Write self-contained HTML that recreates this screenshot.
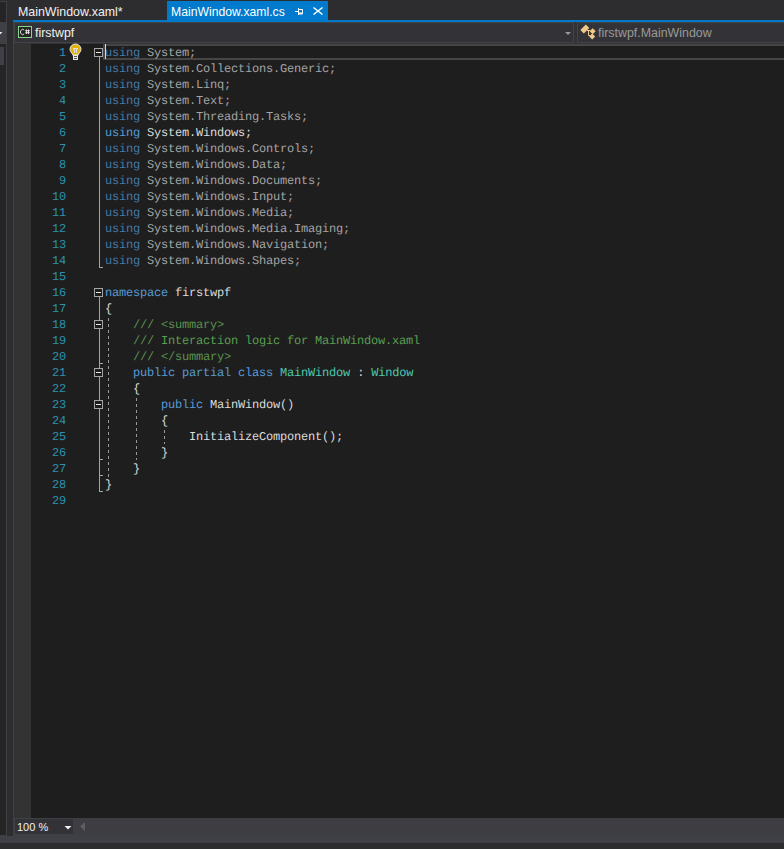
<!DOCTYPE html>
<html><head><meta charset="utf-8">
<style>
html,body{margin:0;padding:0}
body{width:784px;height:849px;background:#2d2d30;overflow:hidden;position:relative;font-family:"Liberation Sans",sans-serif}
.a{position:absolute}
.ui{font-family:"Liberation Sans",sans-serif;font-size:12.4px;line-height:16px;white-space:pre}
#code{position:absolute;left:105px;top:45px;font-family:"Liberation Mono",monospace;font-size:12px;letter-spacing:-0.2011px;line-height:16px;color:#dcdcdc;text-rendering:geometricPrecision}
#code div{height:16px;white-space:pre}
#nums{position:absolute;left:30px;width:36px;top:45px;font-family:"Liberation Mono",monospace;font-size:12px;letter-spacing:-0.2011px;line-height:16px;white-space:pre;color:#2b91af;text-rendering:geometricPrecision;text-align:right}
#nums div{height:16px}
.k{color:#569cd6}
.t{color:#4ec9b0}
.c{color:#5a9f52}
.x{color:#5b9150}
.dk{color:#4579a8}
.dt{color:#a4a4a4}
.guide{position:absolute;width:1px;background:repeating-linear-gradient(to bottom,#999999 0,#999999 3px,transparent 3px,transparent 6px)}
.fbox{position:absolute;left:94px;width:7px;height:7px;border:1px solid #a5a5a5;background:#1e1e1e}
.fbox:after{content:"";position:absolute;left:1px;top:3px;width:5px;height:1px;background:#e6e6e6}
.fl{position:absolute;left:99px;width:1px;background:#a5a5a5}
.tick{position:absolute;left:99px;width:4px;height:1px;background:#a5a5a5}
</style></head><body>

<!-- left side panel edge -->
<div class="a" style="left:0;top:1px;width:6px;height:834px;background:#252526;border-top:1px solid #3f3f46"></div>
<div class="a" style="left:0;top:22px;width:6px;height:22px;background:#3f3f46"></div>
<div class="a" style="left:0;top:47px;width:4px;height:18px;background:#3f3f46"></div>
<svg class="a" style="left:0;top:30px" width="6" height="6" viewBox="0 30 6 6"><path d="M-3 32H2.5L-0.25 34.8Z" fill="#f1f1f1"/></svg>
<div class="a" style="left:6px;top:1px;width:1px;height:835px;background:#3f3f46"></div>

<!-- tabs -->
<div class="a ui" style="left:18px;top:4px;color:#f1f1f1">MainWindow.xaml*</div>
<div class="a" style="left:167px;top:1px;width:161px;height:19px;background:#007acc"></div>
<div class="a ui" style="left:171px;top:4px;color:#ffffff;font-size:12.2px">MainWindow.xaml.cs</div>
<svg class="a" style="left:290px;top:4px" width="36" height="14" viewBox="290 4 36 14">
<path d="M295 11.5H298" stroke="#fff" stroke-width="1"/>
<path d="M298.5 8V15" stroke="#fff" stroke-width="1"/>
<path d="M298.5 9.5H302.5V13.5H298.5" stroke="#fff" stroke-width="1" fill="none"/>
<path d="M298.5 13.5H302.5" stroke="#fff" stroke-width="2"/>
<path d="M313.5 7.5L322.5 14.5M322.5 7.5L313.5 14.5" stroke="#fff" stroke-width="1.5"/>
</svg>
<div class="a" style="left:13px;top:20px;width:771px;height:2px;background:#007acc"></div>

<!-- nav bar -->
<div class="a" style="left:13px;top:22px;width:1px;height:814px;background:#3f3f46"></div>
<div class="a" style="left:14px;top:22px;width:770px;height:22px;background:#333337"></div>
<div class="a" style="left:14px;top:22px;width:558px;height:19px;background:#333337;border:1px solid #434346"></div>
<div class="a" style="left:577px;top:22px;width:210px;height:19px;background:#333337;border:1px solid #434346"></div>
<div class="a" style="left:18px;top:26px;width:12px;height:10px;border:1px solid #8cd48a;background:#252526"></div>
<svg class="a" style="left:18px;top:26px" width="14" height="12" viewBox="18 26 14 12"><path d="M24.2 30A2.3 2.6 0 1 0 24.2 34" stroke="#d8d8d8" stroke-width="1" fill="none"/><path d="M26.5 29.5V34M28.5 29.5V34M25.2 30.7H29.8M25.2 32.7H29.8" stroke="#e0e0e0" stroke-width="1"/></svg>
<div class="a ui" style="left:35px;top:25px;color:#f1f1f1">firstwpf</div>
<svg class="a" style="left:564px;top:31px" width="8" height="5" viewBox="0 0 8 5"><path d="M1 1H7L4 4Z" fill="#999999"/></svg>
<svg class="a" style="left:578px;top:23px" width="20" height="18" viewBox="578 23 20 18">
<path d="M585.8 24.6L589.3 28.1L583.8 33.4L580.4 29.9Z" fill="#f0c98a"/>
<path d="M592.7 28.2L595.7 31.2L592.7 34.2L589.7 31.2Z" fill="#f0c98a"/>
<path d="M592.2 33.4L595.2 36.4L592.2 39.4L589.2 36.4Z" fill="#f0c98a"/>
<path d="M587 30.5H590.5M588.5 30.5V35.5H590.5" stroke="#f0c98a" stroke-width="1" fill="none"/>
</svg>
<div class="a ui" style="left:598px;top:25px;color:#999999">firstwpf.MainWindow</div>

<!-- editor -->
<div class="a" style="left:14px;top:43px;width:17px;height:775px;background:#333333"></div>
<div class="a" style="left:31px;top:44px;width:753px;height:774px;background:#1e1e1e"></div>
<div class="a" style="left:14px;top:43px;width:770px;height:1px;background:#333337"></div>
<svg class="a" style="left:68px;top:43px" width="16" height="19" viewBox="68 43 16 19">
<path d="M75.5 44C72.5 44 70 46.3 70 49.2C70 51.2 71.3 52.5 72.6 54.2V55H78.4V54.2C79.7 52.5 81 51.2 81 49.2C81 46.3 78.5 44 75.5 44Z" fill="#e2b300" stroke="#e8e8ee" stroke-width="1"/>
<rect x="73" y="48" width="5" height="1.5" fill="#dcdcf0"/><rect x="74" y="49.5" width="1" height="3.3" fill="#dcdcf0"/><rect x="76" y="49.5" width="1" height="3.3" fill="#dcdcf0"/>
<rect x="73" y="55" width="5" height="5" fill="#e8e8e8"/>
<rect x="74" y="56" width="3" height="1" fill="#555"/>
<rect x="74" y="58" width="3" height="1" fill="#555"/>
</svg>
<!-- current line -->
<div class="a" style="left:103px;top:44px;width:690px;height:12px;border:2px solid #464646"></div>
<div class="a" style="left:105px;top:44px;width:1px;height:15px;background:#dcdcdc"></div>

<div id="nums"><div>1</div><div>2</div><div>3</div><div>4</div><div>5</div><div>6</div><div>7</div><div>8</div><div>9</div><div>10</div><div>11</div><div>12</div><div>13</div><div>14</div><div>15</div><div>16</div><div>17</div><div>18</div><div>19</div><div>20</div><div>21</div><div>22</div><div>23</div><div>24</div><div>25</div><div>26</div><div>27</div><div>28</div><div>29</div></div>

<div id="code">
<div><span class="dk">using</span><span class="dt"> System;</span></div>
<div><span class="dk">using</span><span class="dt"> System.Collections.Generic;</span></div>
<div><span class="dk">using</span><span class="dt"> System.Linq;</span></div>
<div><span class="dk">using</span><span class="dt"> System.Text;</span></div>
<div><span class="dk">using</span><span class="dt"> System.Threading.Tasks;</span></div>
<div><span class="k">using</span> System.Windows;</div>
<div><span class="dk">using</span><span class="dt"> System.Windows.Controls;</span></div>
<div><span class="dk">using</span><span class="dt"> System.Windows.Data;</span></div>
<div><span class="dk">using</span><span class="dt"> System.Windows.Documents;</span></div>
<div><span class="dk">using</span><span class="dt"> System.Windows.Input;</span></div>
<div><span class="dk">using</span><span class="dt"> System.Windows.Media;</span></div>
<div><span class="dk">using</span><span class="dt"> System.Windows.Media.Imaging;</span></div>
<div><span class="dk">using</span><span class="dt"> System.Windows.Navigation;</span></div>
<div><span class="dk">using</span><span class="dt"> System.Windows.Shapes;</span></div>
<div> </div>
<div><span class="k">namespace</span> firstwpf</div>
<div>{</div>
<div>    <span class="x">/// &lt;summary&gt;</span></div>
<div>    <span class="x">///</span><span class="c"> Interaction logic for MainWindow.xaml</span></div>
<div>    <span class="x">/// &lt;/summary&gt;</span></div>
<div>    <span class="k">public</span> <span class="k">partial</span> <span class="k">class</span> <span class="t">MainWindow</span> : <span class="t">Window</span></div>
<div>    {</div>
<div>        <span class="k">public</span> MainWindow()</div>
<div>        {</div>
<div>            InitializeComponent();</div>
<div>        }</div>
<div>    }</div>
<div>}</div>
<div> </div>
</div>

<!-- folding -->
<div class="fbox" style="top:48px"></div>
<div class="fl" style="top:57px;height:211px"></div>
<div class="tick" style="top:267px"></div>
<div class="fbox" style="top:288px"></div>
<div class="fl" style="top:297px;height:195px"></div>
<div class="tick" style="top:491px"></div>
<div class="fbox" style="top:320px"></div>
<div class="tick" style="top:363px"></div>
<div class="fbox" style="top:368px"></div>
<div class="tick" style="top:475px"></div>
<div class="fbox" style="top:400px"></div>
<div class="tick" style="top:459px"></div>

<!-- guides -->
<div class="guide" style="left:108px;top:318px;height:159px"></div>
<div class="guide" style="left:136px;top:398px;height:62px"></div>
<div class="guide" style="left:164px;top:430px;height:14px"></div>

<!-- bottom -->
<div class="a" style="left:14px;top:818px;width:770px;height:17px;background:#3e3e42"></div>
<div class="a" style="left:14px;top:818px;width:58px;height:15px;background:#333337;border:1px solid #3f3f46"></div>
<div class="a ui" style="left:17px;top:819px;color:#f1f1f1;font-size:11px">100 %</div>
<div class="a" style="left:0;top:835px;width:784px;height:8px;background:#3f3f46"></div>
<div class="a" style="left:7px;top:835px;width:6px;height:1px;background:#2d2d30"></div>
<svg class="a" style="left:64px;top:825px" width="8" height="6" viewBox="0 0 8 6"><path d="M0.5 1H7.5L4 4.5Z" fill="#f1f1f1"/></svg>
<svg class="a" style="left:79px;top:821px" width="8" height="11" viewBox="0 0 8 11"><path d="M6 1V10L1 5.5Z" fill="#5e5e62"/></svg>

</body></html>
